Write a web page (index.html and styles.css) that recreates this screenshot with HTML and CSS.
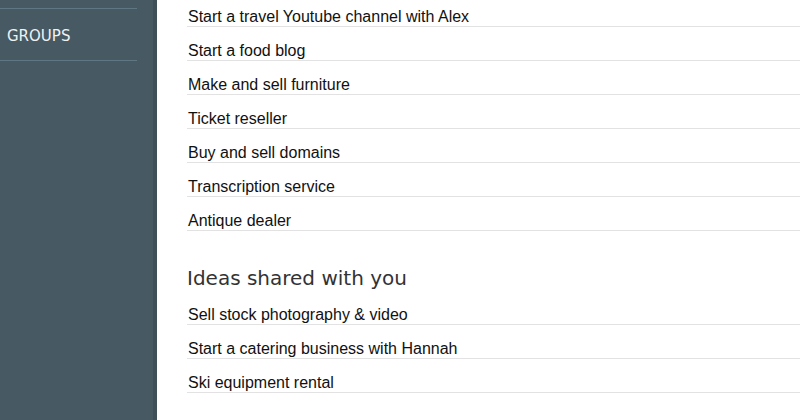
FILE: index.html
```html
<!DOCTYPE html>
<html>
<head>
<meta charset="utf-8">
<link rel="stylesheet" href="styles.css">
</head>
<body>
<div class="app">
  <aside class="sidebar">
    <nav class="side-nav">
      <div class="side-item">GROUPS</div>
    </nav>
  </aside>
  <main class="main">
    <ul class="idea-list">
      <li>Start a travel Youtube channel with Alex</li>
      <li>Start a food blog</li>
      <li>Make and sell furniture</li>
      <li>Ticket reseller</li>
      <li>Buy and sell domains</li>
      <li>Transcription service</li>
      <li>Antique dealer</li>
    </ul>
    <h2 class="section-title">Ideas shared with you</h2>
    <ul class="idea-list">
      <li>Sell stock photography &amp; video</li>
      <li>Start a catering business with Hannah</li>
      <li>Ski equipment rental</li>
    </ul>
  </main>
</div>
</body>
</html>
```

FILE: styles.css
```css
html, body {
  margin: 0;
  padding: 0;
  height: 100%;
  overflow: hidden;
  background: #fff;
}
.app {
  display: flex;
  height: 420px;
}
.sidebar {
  width: 153px;
  flex: none;
  background: #475a64;
  border-right: 4px solid #3f5058;
  padding-top: 8px;
}
.side-nav {
  width: 137px;
  border-top: 1px solid #5f7782;
}
.side-item {
  font-family: "DejaVu Sans", sans-serif;
  font-size: 15px;
  color: #eef2f3;
  padding: 3px 0 0 7px;
  height: 48px;
  line-height: 49px;
  border-bottom: 1px solid #5f7782;
}
.main {
  flex: 1;
  padding-left: 30px;
  margin-top: -7px;
}
.idea-list {
  list-style: none;
  margin: 0;
  padding: 0;
}
.idea-list li {
  font-family: "Liberation Sans", Arial, sans-serif;
  font-size: 16px;
  line-height: 18px;
  color: #111;
  padding: 15px 0 0 1px;
  border-bottom: 1px solid #e2e2e2;
}
.section-title {
  font-family: "DejaVu Sans", sans-serif;
  font-weight: normal;
  font-size: 20px;
  color: #333;
  margin: 0;
  height: 60px;
  box-sizing: border-box;
  padding-top: 35px;
  line-height: 24px;
}
```
